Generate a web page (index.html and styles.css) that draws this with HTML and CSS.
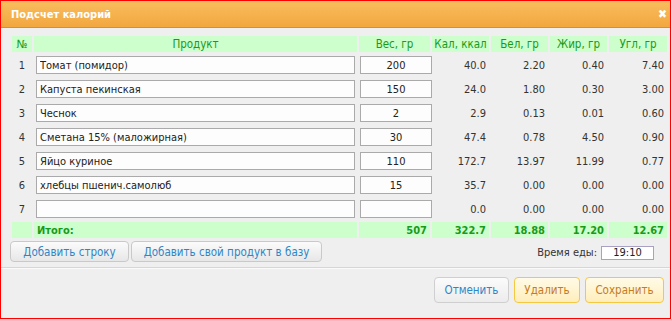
FILE: index.html
```html
<!DOCTYPE html>
<html lang="ru">
<head>
<meta charset="UTF-8" />
<title>Подсчет калорий</title>
<link rel="stylesheet" href="styles.css">
</head>
<body>
  <div class="dialog">
    <div class="titlebar">
      <span class="title">Подсчет калорий</span>
      <span class="close">✖</span>
    </div>

    <div class="content">
      <table class="calc">
        <colgroup>
          <col style="width:20px"><col style="width:323px"><col style="width:71px">
          <col style="width:57px"><col style="width:57px"><col style="width:57px"><col style="width:58px">
        </colgroup>
        <thead>
          <tr>
            <th>№</th><th>Продукт</th><th>Вес, гр</th><th>Кал, ккал</th><th>Бел, гр</th><th>Жир, гр</th><th>Угл, гр</th>
          </tr>
        </thead>
        <tbody>
          <tr>
            <td class="num">1</td>
            <td><input class="product" type="text" value="Томат (помидор)"></td>
            <td><input class="weight" type="text" value="200"></td>
            <td class="val">40.0</td><td class="val">2.20</td><td class="val">0.40</td><td class="val">7.40</td>
          </tr>
          <tr>
            <td class="num">2</td>
            <td><input class="product" type="text" value="Капуста пекинская"></td>
            <td><input class="weight" type="text" value="150"></td>
            <td class="val">24.0</td><td class="val">1.80</td><td class="val">0.30</td><td class="val">3.00</td>
          </tr>
          <tr>
            <td class="num">3</td>
            <td><input class="product" type="text" value="Чеснок"></td>
            <td><input class="weight" type="text" value="2"></td>
            <td class="val">2.9</td><td class="val">0.13</td><td class="val">0.01</td><td class="val">0.60</td>
          </tr>
          <tr>
            <td class="num">4</td>
            <td><input class="product" type="text" value="Сметана 15% (маложирная)"></td>
            <td><input class="weight" type="text" value="30"></td>
            <td class="val">47.4</td><td class="val">0.78</td><td class="val">4.50</td><td class="val">0.90</td>
          </tr>
          <tr>
            <td class="num">5</td>
            <td><input class="product" type="text" value="Яйцо куриное"></td>
            <td><input class="weight" type="text" value="110"></td>
            <td class="val">172.7</td><td class="val">13.97</td><td class="val">11.99</td><td class="val">0.77</td>
          </tr>
          <tr>
            <td class="num">6</td>
            <td><input class="product" type="text" value="хлебцы пшенич.самолюб"></td>
            <td><input class="weight" type="text" value="15"></td>
            <td class="val">35.7</td><td class="val">0.00</td><td class="val">0.00</td><td class="val">0.00</td>
          </tr>
          <tr>
            <td class="num">7</td>
            <td><input class="product" type="text" value=""></td>
            <td><input class="weight" type="text" value=""></td>
            <td class="val">0.0</td><td class="val">0.00</td><td class="val">0.00</td><td class="val">0.00</td>
          </tr>
        </tbody>
        <tfoot>
          <tr>
            <td></td>
            <td class="total-label">Итого:</td>
            <td class="val">507</td>
            <td class="val">322.7</td><td class="val">18.88</td><td class="val">17.20</td><td class="val">12.67</td>
          </tr>
        </tfoot>
      </table>

      <div class="tools">
        <button class="btn-gray">Добавить строку</button>
        <button class="btn-gray wide">Добавить свой продукт в базу</button>
        <div class="meal-time">
          <label for="mealTime">Время еды:</label>
          <input id="mealTime" type="text" value="19:10">
        </div>
      </div>
    </div>

    <div class="footer">
      <button class="btn-cancel">Отменить</button>
      <button class="btn-yellow del">Удалить</button>
      <button class="btn-yellow save">Сохранить</button>
    </div>
  </div>
</body>
</html>
```

FILE: styles.css
```css
body {
  margin: 0;
  font-family: "DejaVu Sans Condensed", "DejaVu Sans", sans-serif;
  font-size: 11px;
  color: #333;
  background: #fff;
}

.dialog {
  width: 671px;
  height: 319px;
  box-sizing: border-box;
  border: 1px solid #f00;
  background: #efefef;
  display: flex;
  flex-direction: column;
}

.titlebar {
  height: 26px;
  display: flex;
  align-items: center;
  justify-content: space-between;
  padding: 0 3px 0 10px;
  background: linear-gradient(#f9bd5e, #f2a73f);
  border-bottom: 1px solid #e38c17;
  color: #fff;
}

.title {
  font-weight: bold;
  font-size: 11px;
}

.close {
  font-size: 12px;
  font-weight: bold;
}

.content {
  padding: 6px 0 0 9px;
  height: 240px;
  box-sizing: border-box;
  border-bottom: 1px solid #d6d6d6;
}

/* таблица продуктов */
.calc {
  width: 659px;
  table-layout: fixed;
  border-collapse: separate;
  border-spacing: 2px 2px;
}

.calc th,
.calc td {
  padding: 0;
  box-sizing: border-box;
}

.calc th {
  height: 16px;
  background: #ccffcc;
  color: #1a9a1a;
  font-weight: normal;
  font-size: 11.5px;
  text-align: center;
}

.calc tbody td {
  height: 22px;
}

.calc td.num {
  text-align: center;
}

.calc td.val {
  text-align: right;
  padding-right: 3px;
}

.calc input {
  height: 18px;
  box-sizing: border-box;
  border: 1px solid #aaa;
  background: #fdfdfd;
  font: inherit;
  color: #222;
  padding: 0 3px;
  margin: 0;
}

.calc input.product {
  width: 319px;
  margin-left: 2px;
}

.calc input.weight {
  width: 72px;
  margin-left: 1px;
  text-align: center;
}

.calc tfoot td {
  height: 16px;
  background: #ccffcc;
  color: #1a9a1a;
  font-weight: bold;
}

.calc td.total-label {
  padding-left: 3px;
}

/* нижние кнопки таблицы */
.tools {
  display: flex;
  align-items: center;
  gap: 2px;
  margin-top: 1px;
}

button {
  font: inherit;
  cursor: pointer;
  border-radius: 4px;
}

.btn-gray {
  height: 21px;
  width: 119px;
  padding: 0;
  background: linear-gradient(#fbfbfb, #e7e7e7);
  border: 1px solid #c9c9c9;
  color: #2e86c7;
  font-size: 11.5px;
}

.btn-gray.wide {
  width: 191px;
}

.meal-time {
  margin-left: auto;
  margin-right: 16px;
  display: flex;
  align-items: center;
  gap: 4px;
  padding-top: 2px;
}

.meal-time input {
  width: 53px;
  height: 14px;
  box-sizing: border-box;
  border: 1px solid #a9a1c4;
  background: #fff;
  font: inherit;
  color: #222;
  text-align: center;
  padding: 0;
}

.footer {
  flex: 1;
  display: flex;
  justify-content: flex-end;
  align-items: flex-start;
  gap: 5px;
  padding: 8px 6px 0 0;
  border-top: 1px solid #fafafa;
}

.footer button {
  height: 26px;
  padding: 0;
  font-size: 11.5px;
}

.btn-cancel {
  width: 75px;
  background: linear-gradient(#fbfbfb, #ececec);
  border: 1px solid #cfcfcf;
  color: #2e86c7;
}

.btn-yellow {
  background: linear-gradient(#fffbe8, #ffeebb);
  border: 1px solid #f5c842;
  color: #c77a1e;
}

.btn-yellow.del {
  width: 66px;
}

.btn-yellow.save {
  width: 79px;
}
```
